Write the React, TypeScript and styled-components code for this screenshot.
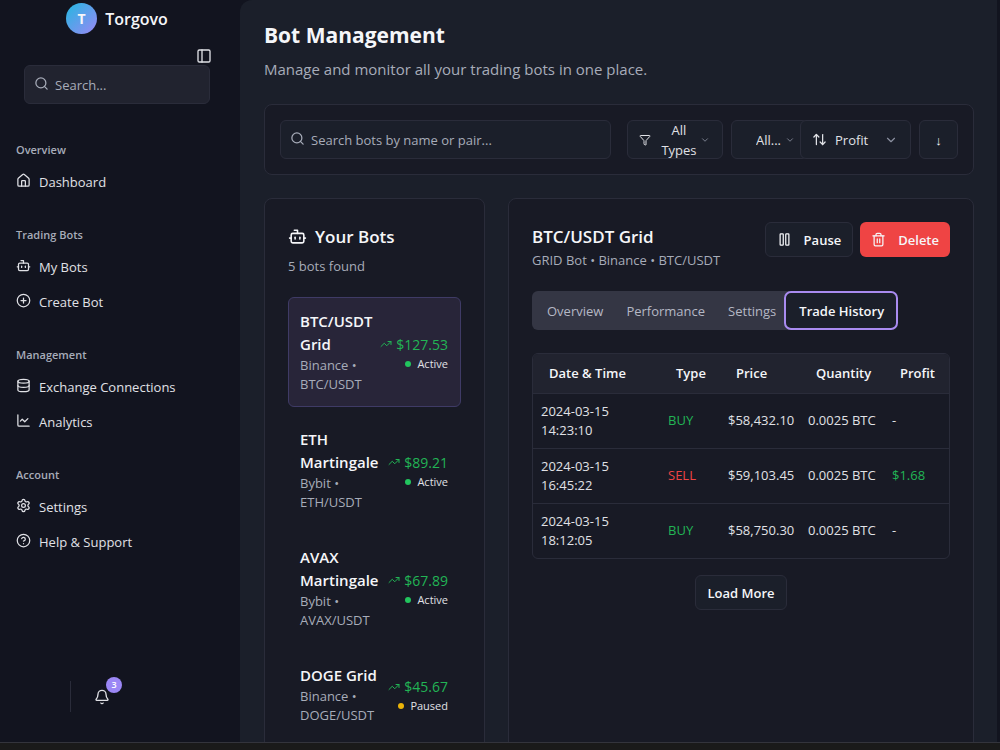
import React, { useState } from "react";
import styled, { createGlobalStyle, css } from "styled-components";
import {
  ArrowUpDown,
  Bell,
  Bot,
  ChartLine,
  ChevronDown,
  CircleHelp,
  CirclePlus,
  Database,
  Filter,
  House,
  PanelLeft,
  Pause,
  Search,
  Settings,
  Trash2,
  TrendingUp,
} from "lucide-react";

const color = {
  sidebar: "#12141f",
  page: "#1b1f2a",
  card: "#181a25",
  raised: "#21232f",
  tabs: "#343644",
  border: "#2a2c3a",
  text: "#f5f6f9",
  soft: "#e0e1e6",
  muted: "#a7acb9",
  faint: "#8b90a0",
  accent: "#9b87f5",
  green: "#22b455",
  greenDot: "#22c55e",
  amber: "#eab308",
  red: "#ef4444",
};

const GlobalStyle = createGlobalStyle`
  *, *::before, *::after { box-sizing: border-box; }
  body {
    margin: 0;
    background: #1a1a1a;
    color: ${color.text};
    font-family: "Open Sans", "Noto Sans", sans-serif;
    font-size: 13px;
    line-height: 20px;
  }
  h1, h2, p, ul { margin: 0; padding: 0; }
  ul { list-style: none; }
  button, input, select { font: inherit; color: inherit; margin: 0; }
  svg { display: block; flex-shrink: 0; }
`;

const Shell = styled.div`
  display: grid;
  grid-template-columns: 240px minmax(0, 1fr);
  grid-template-rows: minmax(0, 1fr);
  height: calc(100vh - 7px);
  overflow: hidden;
  background: ${color.sidebar};
  border-bottom: 1px solid #33343c;
`;

const Sidebar = styled.aside`
  display: flex;
  flex-direction: column;
  padding: 3px 16px 24px;
  background: ${color.sidebar};
`;

const Brand = styled.a`
  display: flex;
  align-items: center;
  align-self: center;
  gap: 8px;
  height: 31px;
  margin-right: 6px;
  color: ${color.text};
  font-size: 16px;
  font-weight: 600;
  text-decoration: none;
`;

const BrandMark = styled.span`
  display: grid;
  place-items: center;
  width: 31px;
  height: 31px;
  border-radius: 50%;
  background: linear-gradient(135deg, #22b8e0, #9b87f5);
  font-size: 14px;
  font-weight: 700;
`;

const IconButton = styled.button`
  display: grid;
  place-items: center;
  padding: 0;
  border: 0;
  background: none;
  color: ${color.soft};
  cursor: pointer;
`;

const CollapseButton = styled(IconButton)`
  align-self: flex-end;
  width: 16px;
  height: 16px;
  margin: 14px 12px 1px 0;
`;

const SearchField = styled.label<{ $raised?: boolean }>`
  display: flex;
  align-items: center;
  gap: 6px;
  flex: 1;
  min-width: 0;
  height: 39px;
  padding: 0 9px;
  border: 1px solid ${color.border};
  border-radius: 6px;
  background: ${(p) => (p.$raised ? color.raised : color.page)};
  color: ${color.muted};

  svg { margin-bottom: 3px; }
  input {
    flex: 1;
    min-width: 0;
    padding: 0;
    border: 0;
    outline: 0;
    background: none;
  }
  input::placeholder { color: ${color.muted}; opacity: 1; }
`;

const SidebarSearch = styled.div`
  display: flex;
  margin: 0 14px 31px 8px;
`;

const NavGroup = styled.section`
  margin-bottom: 21px;
`;

const NavLabel = styled.h2`
  color: ${color.muted};
  font-size: 11px;
  font-weight: 600;
  line-height: 29px;
`;

const NavLink = styled.a`
  display: flex;
  align-items: center;
  gap: 8px;
  height: 35px;
  color: ${color.soft};
  text-decoration: none;

  svg { margin-bottom: 2px; }
`;

const SidebarFooter = styled.div`
  display: flex;
  align-items: center;
  gap: 23px;
  height: 31px;
  margin: auto 0 6px 54px;
`;

const Divider = styled.span`
  width: 1px;
  height: 31px;
  background: ${color.border};
`;

const BellButton = styled(IconButton)`
  position: relative;
  width: 16px;
  height: 16px;
`;

const Badge = styled.span`
  position: absolute;
  left: 12px;
  top: -12px;
  width: 16px;
  height: 16px;
  border-radius: 50%;
  background: ${color.accent};
  color: #fff;
  font-size: 9px;
  font-weight: 600;
  line-height: 16px;
  text-align: center;
`;

const Main = styled.main`
  min-width: 0;
  margin-right: 3px;
  padding: 20px 23px 0 24px;
  border-top-left-radius: 12px;
  background: ${color.page};
`;

const PageTitle = styled.h1`
  font-size: 21px;
  font-weight: 700;
  line-height: 30px;
`;

const PageIntro = styled.p`
  margin: 7px 0 23px;
  color: ${color.muted};
  font-size: 15px;
  line-height: 24px;
`;

const card = css`
  border: 1px solid ${color.border};
  border-radius: 8px;
  background: ${color.card};
`;

const Toolbar = styled.form`
  ${card}
  display: flex;
  gap: 8px;
  height: 71px;
  padding: 15px;
`;

const ToolbarSearch = styled.div`
  display: flex;
  flex: 1;
  min-width: 0;
  margin-right: 8px;
`;

const control = css`
  border: 1px solid ${color.border};
  border-radius: 6px;
  background: ${color.page};
`;

const SelectBox = styled.div<{ $width: number; $overlap?: boolean }>`
  ${control}
  position: relative;
  display: flex;
  align-items: center;
  width: ${(p) => p.$width}px;
  height: 39px;
  padding: 0 12px 0 11px;
  margin-left: ${(p) => (p.$overlap ? "-16px" : "0")};
  color: ${color.soft};
  overflow: hidden;
`;

const PlainSelect = styled.select<{ $inset?: number }>`
  flex: 1;
  min-width: 0;
  height: 100%;
  padding: 0 0 0 ${(p) => p.$inset ?? 0}px;
  border: 0;
  outline: 0;
  appearance: none;
  background: none;
  option { background: ${color.card}; }
`;

const CoverSelect = styled.select`
  position: absolute;
  inset: 0;
  width: 100%;
  height: 100%;
  opacity: 0;
  cursor: pointer;
`;

const SelectValue = styled.span`
  flex: 1;
  padding: 0 2px 0 9px;
  text-align: center;
`;

const Chevron = styled(ChevronDown)`
  color: ${color.faint};
`;

const SquareButton = styled.button`
  ${control}
  width: 39px;
  height: 39px;
  padding: 0;
  cursor: pointer;
`;

const Columns = styled.div`
  display: grid;
  grid-template-columns: minmax(220px, 10fr) minmax(0, 21fr);
  gap: 23px;
  min-height: 640px;
  margin-top: 23px;

  @media (max-width: 1100px) {
    grid-template-columns: 221px minmax(0, 1fr);
  }
`;

const Panel = styled.section`
  ${card}
  padding: 23px;
`;

const PanelTitle = styled.h2`
  display: flex;
  align-items: center;
  gap: 8px;
  font-size: 17px;
  font-weight: 600;
  line-height: 30px;

  svg { margin-bottom: 2px; }
`;

const PanelNote = styled.p`
  margin: 4px 0 21px;
  color: ${color.muted};
`;

const BotList = styled.ul`
  display: grid;
  gap: 8px;
`;

const BotButton = styled.button<{ $selected: boolean }>`
  display: flex;
  align-items: center;
  justify-content: space-between;
  width: 100%;
  padding: 12px 12px 12px 11px;
  border: 1px solid ${(p) => (p.$selected ? "#3f3b66" : "transparent")};
  border-radius: 6px;
  background: ${(p) => (p.$selected ? "#282539" : "none")};
  text-align: left;
  cursor: pointer;
`;

const BotInfo = styled.span`
  width: 80px;
`;

const BotName = styled.span`
  display: block;
  font-size: 15px;
  font-weight: 600;
  line-height: 23px;
`;

const BotMeta = styled.span`
  display: block;
  color: ${color.muted};
  line-height: 19px;
`;

const BotStats = styled.span`
  display: flex;
  flex-direction: column;
  align-items: flex-end;
`;

const BotProfit = styled.span`
  display: flex;
  align-items: center;
  gap: 4px;
  color: ${color.green};
  font-size: 14px;
  line-height: 23px;
`;

const BotStatus = styled.span<{ $paused: boolean }>`
  display: flex;
  align-items: center;
  gap: 6px;
  color: ${color.soft};
  font-size: 11px;
  line-height: 16px;

  &::before {
    content: "";
    width: 6px;
    height: 6px;
    border-radius: 50%;
    background: ${(p) => (p.$paused ? color.amber : color.greenDot)};
  }
`;

const DetailHeader = styled.header`
  display: flex;
  justify-content: space-between;
  align-items: flex-start;
`;

const DetailMeta = styled.p`
  color: ${color.muted};
  line-height: 16px;
`;

const Actions = styled.div`
  display: flex;
  gap: 7px;
`;

const Button = styled.button<{ $danger?: boolean }>`
  ${control}
  display: inline-flex;
  align-items: center;
  gap: 12px;
  height: 35px;
  padding: 0 11px;
  font-weight: 600;
  cursor: pointer;
  ${(p) => p.$danger && css`
    border: 0;
    background: ${color.red};
  `}
`;

const TabList = styled.div`
  display: flex;
  width: fit-content;
  height: 39px;
  margin: 23px 0;
  padding-left: 4px;
  border-radius: 6px;
  background: linear-gradient(to right, ${color.tabs} 262px, transparent 262px);
`;

const Tab = styled.button<{ $active: boolean }>`
  padding: 0 12px 0 11px;
  border: 0;
  background: none;
  color: #b4b8c4;
  font-weight: 500;
  white-space: nowrap;
  cursor: pointer;
  ${(p) => p.$active && css`
    margin-left: -4px;
    padding: 0 12px 0 13px;
    border: 2px solid #a98bf0;
    border-radius: 7px;
    background: ${color.page};
    color: ${color.text};
    font-weight: 600;
  `}
`;

const TableFrame = styled.div`
  border: 1px solid ${color.border};
  border-radius: 6px;
  overflow: hidden;
`;

const Table = styled.table`
  width: 100%;
  table-layout: fixed;
  border-collapse: collapse;
`;

const HeadCell = styled.th<{ $width?: number }>`
  width: ${(p) => (p.$width ? `${p.$width}px` : "auto")};
  height: 39px;
  padding: 0 0 0 16px;
  background: ${color.raised};
  font-weight: 600;
  text-align: left;
`;

const Cell = styled.td<{ $tone?: string }>`
  height: 55px;
  padding: 0 8px;
  border-top: 1px solid ${color.border};
  color: ${(p) => p.$tone ?? color.soft};
  line-height: 19px;
  white-space: nowrap;
`;

const LoadMore = styled.div`
  display: flex;
  justify-content: center;
  margin-top: 16px;
`;

const nav = [
  { label: "Overview", items: [{ name: "Dashboard", Icon: House }] },
  { label: "Trading Bots", items: [{ name: "My Bots", Icon: Bot }, { name: "Create Bot", Icon: CirclePlus }] },
  { label: "Management", items: [{ name: "Exchange Connections", Icon: Database }, { name: "Analytics", Icon: ChartLine }] },
  { label: "Account", items: [{ name: "Settings", Icon: Settings }, { name: "Help & Support", Icon: CircleHelp }] },
];

const bots = [
  { name: "BTC/USDT Grid", exchange: "Binance", pair: "BTC/USDT", profit: "$127.53", status: "Active" },
  { name: "ETH Martingale", exchange: "Bybit", pair: "ETH/USDT", profit: "$89.21", status: "Active" },
  { name: "AVAX Martingale", exchange: "Bybit", pair: "AVAX/USDT", profit: "$67.89", status: "Active" },
  { name: "DOGE Grid", exchange: "Binance", pair: "DOGE/USDT", profit: "$45.67", status: "Paused" },
];

const trades = [
  { date: "2024-03-15", time: "14:23:10", type: "BUY", price: "$58,432.10", quantity: "0.0025 BTC", profit: "-" },
  { date: "2024-03-15", time: "16:45:22", type: "SELL", price: "$59,103.45", quantity: "0.0025 BTC", profit: "$1.68" },
  { date: "2024-03-15", time: "18:12:05", type: "BUY", price: "$58,750.30", quantity: "0.0025 BTC", profit: "-" },
];

const tabs = ["Overview", "Performance", "Settings", "Trade History"];

export default function App() {
  const [selected, setSelected] = useState(0);
  const [tab, setTab] = useState("Trade History");

  return (
    <>
      <GlobalStyle />
      <Shell>
        <Sidebar>
          <Brand href="#">
            <BrandMark>T</BrandMark>
            Torgovo
          </Brand>
          <CollapseButton aria-label="Collapse sidebar">
            <PanelLeft size={16} />
          </CollapseButton>
          <SidebarSearch>
            <SearchField $raised>
              <Search size={15} />
              <input aria-label="Search" placeholder="Search..." />
            </SearchField>
          </SidebarSearch>
          <nav>
            {nav.map((group) => (
              <NavGroup key={group.label}>
                <NavLabel>{group.label}</NavLabel>
                {group.items.map(({ name, Icon }) => (
                  <NavLink href="#" key={name}>
                    <Icon size={15} />
                    {name}
                  </NavLink>
                ))}
              </NavGroup>
            ))}
          </nav>
          <SidebarFooter>
            <Divider />
            <BellButton aria-label="Notifications">
              <Bell size={16} />
              <Badge>3</Badge>
            </BellButton>
          </SidebarFooter>
        </Sidebar>

        <Main>
          <PageTitle>Bot Management</PageTitle>
          <PageIntro>Manage and monitor all your trading bots in one place.</PageIntro>

          <Toolbar onSubmit={(e) => e.preventDefault()}>
            <ToolbarSearch>
              <SearchField>
                <Search size={15} />
                <input aria-label="Search bots" placeholder="Search bots by name or pair..." />
              </SearchField>
            </ToolbarSearch>
            <SelectBox $width={96}>
              <Filter size={12} />
              <SelectValue aria-hidden="true">All Types</SelectValue>
              <Chevron size={10} />
              <CoverSelect aria-label="Bot type">
                <option>All Types</option>
              </CoverSelect>
            </SelectBox>
            <SelectBox $width={77}>
              <PlainSelect aria-label="Status" $inset={13}>
                <option>All...</option>
              </PlainSelect>
              <Chevron size={10} />
            </SelectBox>
            <SelectBox $width={111} $overlap>
              <ArrowUpDown size={15} />
              <PlainSelect aria-label="Sort by" $inset={8}>
                <option>Profit</option>
              </PlainSelect>
              <Chevron size={14} />
            </SelectBox>
            <SquareButton type="button" aria-label="Sort descending">↓</SquareButton>
          </Toolbar>

          <Columns>
            <Panel>
              <PanelTitle>
                <Bot size={19} />
                Your Bots
              </PanelTitle>
              <PanelNote>5 bots found</PanelNote>
              <BotList>
                {bots.map((bot, i) => (
                  <li key={bot.name}>
                    <BotButton $selected={i === selected} onClick={() => setSelected(i)}>
                      <BotInfo>
                        <BotName>{bot.name}</BotName>
                        <BotMeta>
                          {bot.exchange} • {bot.pair}
                        </BotMeta>
                      </BotInfo>
                      <BotStats>
                        <BotProfit>
                          <TrendingUp size={12} />
                          {bot.profit}
                        </BotProfit>
                        <BotStatus $paused={bot.status === "Paused"}>{bot.status}</BotStatus>
                      </BotStats>
                    </BotButton>
                  </li>
                ))}
              </BotList>
            </Panel>

            <Panel>
              <DetailHeader>
                <div>
                  <PanelTitle>BTC/USDT Grid</PanelTitle>
                  <DetailMeta>GRID Bot • Binance • BTC/USDT</DetailMeta>
                </div>
                <Actions>
                  <Button>
                    <Pause size={15} />
                    Pause
                  </Button>
                  <Button $danger>
                    <Trash2 size={15} />
                    Delete
                  </Button>
                </Actions>
              </DetailHeader>

              <TabList role="tablist">
                {tabs.map((name) => (
                  <Tab key={name} role="tab" aria-selected={name === tab} $active={name === tab} onClick={() => setTab(name)}>
                    {name}
                  </Tab>
                ))}
              </TabList>

              <TableFrame>
                <Table>
                  <thead>
                    <tr>
                      <HeadCell>Date &amp; Time</HeadCell>
                      <HeadCell $width={60}>Type</HeadCell>
                      <HeadCell $width={80}>Price</HeadCell>
                      <HeadCell $width={84}>Quantity</HeadCell>
                      <HeadCell $width={65}>Profit</HeadCell>
                    </tr>
                  </thead>
                  <tbody>
                    {trades.map((t) => (
                      <tr key={t.time}>
                        <Cell>
                          {t.date}
                          <br />
                          {t.time}
                        </Cell>
                        <Cell $tone={t.type === "BUY" ? color.green : color.red}>{t.type}</Cell>
                        <Cell>{t.price}</Cell>
                        <Cell>{t.quantity}</Cell>
                        <Cell $tone={t.profit === "-" ? undefined : color.green}>{t.profit}</Cell>
                      </tr>
                    ))}
                  </tbody>
                </Table>
              </TableFrame>
              <LoadMore>
                <Button>Load More</Button>
              </LoadMore>
            </Panel>
          </Columns>
        </Main>
      </Shell>
    </>
  );
}
